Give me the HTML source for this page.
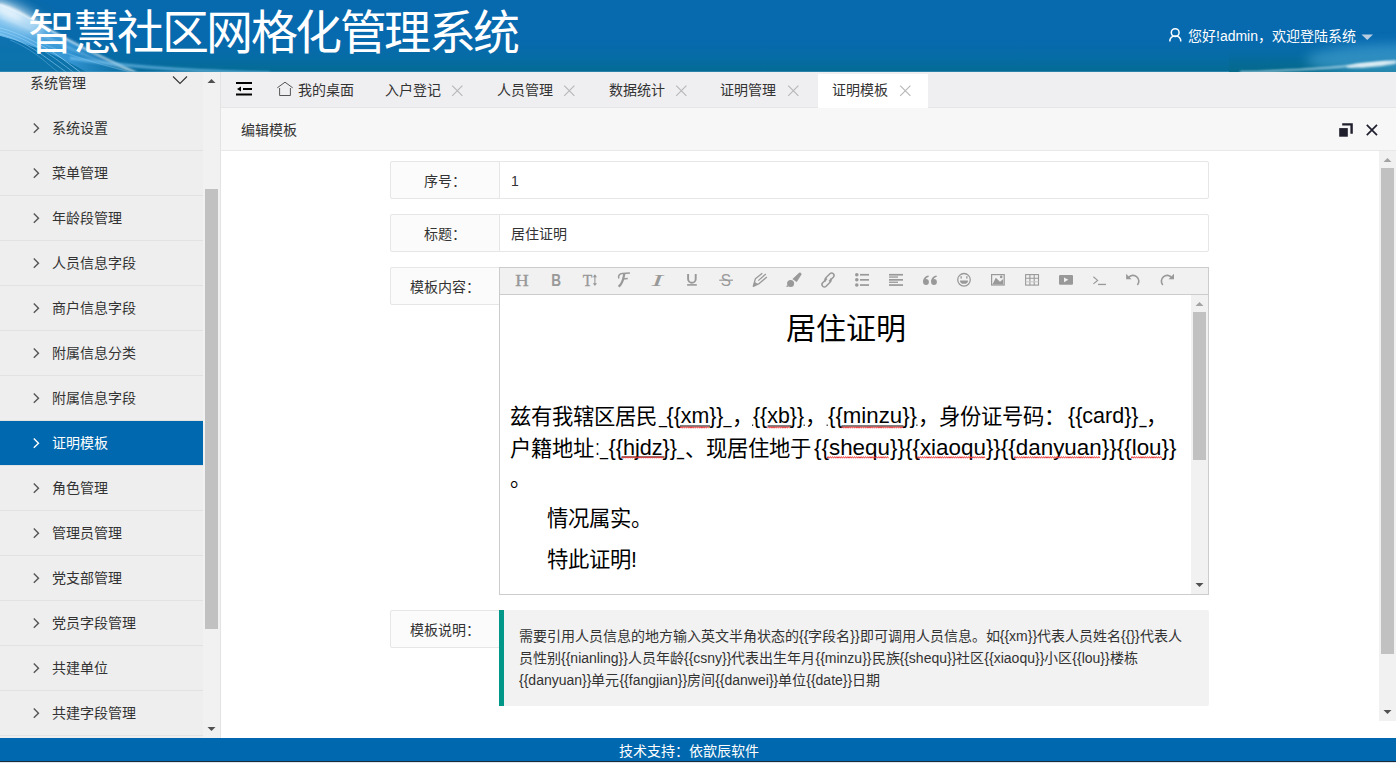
<!DOCTYPE html>
<html lang="zh-CN">
<head>
<meta charset="utf-8">
<style>
*{margin:0;padding:0;box-sizing:border-box}
html,body{width:1396px;height:763px;overflow:hidden;background:#fff;font-family:"Liberation Sans",sans-serif;font-size:14px;color:#333}
.a{position:absolute}
.t{position:absolute;white-space:nowrap;line-height:16px}
#hdr{left:0;top:0;width:1396px;height:72px;background:linear-gradient(to bottom,#0769ae 0%,#0769ae 55%,#066ca6 78%,#046b94 100%);overflow:hidden}
#title{left:28px;top:3px;font-size:47px;line-height:60px;color:#fff;white-space:nowrap;letter-spacing:-2.5px}
#side{left:0;top:72px;width:203px;height:666px;background:#eee;overflow:hidden}
.sep{position:absolute;left:0;width:203px;height:1px;background:#e2e2e2}
.sb{position:absolute;background:#f1f1f1}
.th{position:absolute;background:#c1c1c1}
#tabs{left:221px;top:72px;width:1175px;height:36px;background:#efeef1;border-bottom:1px solid #e6e6e6}
#chdr{left:221px;top:108px;width:1175px;height:43px;background:#f7f7f7;border-bottom:1px solid #e8e8e8}
.lbl{position:absolute;left:390px;width:110px;height:38px;background:#fbfbfb;border:1px solid #e6e6e6;border-radius:2px 0 0 2px;text-align:center;line-height:16px;padding-top:11px;color:#333}
.inp{position:absolute;left:499px;width:710px;height:38px;background:#fff;border:1px solid #e6e6e6;border-radius:0 2px 2px 0;padding-left:11px;line-height:16px;padding-top:11px;color:#333}
#footer{left:0;top:738px;width:1396px;height:23px;background:#0068ae;color:#fff}
svg{position:absolute;overflow:visible}
</style>
</head>
<body>

<div id="hdr" class="a">
<svg style="left:0;top:0" width="1396" height="72"><defs><filter id="bl1" x="-20%" y="-50%" width="140%" height="200%"><feGaussianBlur stdDeviation="0.9"/></filter><filter id="bl05" x="-20%" y="-50%" width="140%" height="200%"><feGaussianBlur stdDeviation="0.45"/></filter><filter id="bl3" x="-50%" y="-50%" width="200%" height="200%"><feGaussianBlur stdDeviation="3"/></filter><filter id="bl6" x="-50%" y="-50%" width="200%" height="200%"><feGaussianBlur stdDeviation="6"/></filter><linearGradient id="band" x1="0" y1="0" x2="1" y2="0"><stop offset="0" stop-color="#7cc6f5" stop-opacity="0.85"/><stop offset="0.55" stop-color="#4aaaea" stop-opacity="0.65"/><stop offset="1" stop-color="#2a8ad0" stop-opacity="0.1"/></linearGradient><linearGradient id="rb" x1="0" y1="0" x2="0" y2="1"><stop offset="0" stop-color="#06699c" stop-opacity="0"/><stop offset="1" stop-color="#056a8a" stop-opacity="0.9"/></linearGradient></defs><path d="M0 0H40C60 10 80 25 100 40C120 52 150 64 190 72H0Z" fill="#0b6ea6" opacity="0.35"/><path d="M0 4C20 11 40 24 62 36C82 47 102 58 128 72H86C62 58 36 46 0 36Z" fill="url(#band)"/><path d="M0 36C36 46 62 58 86 72H0Z" fill="#127ab4" opacity="0.5"/><ellipse cx="14" cy="15" rx="34" ry="10" transform="rotate(26 14 15)" fill="#e8f6ff" opacity="0.75" filter="url(#bl6)"/><ellipse cx="8" cy="12" rx="16" ry="5" transform="rotate(26 8 12)" fill="#ffffff" opacity="0.55" filter="url(#bl3)"/><g fill="none" filter="url(#bl1)"><path d="M0 4.5C12 8 24 14 36 22C52 31 68 40 84 48C100 56 115 64 135 72" stroke="#fff" stroke-opacity="0.85" stroke-width="1.8"/><path d="M0 17C14 21 26 27 40 34C62 45 84 55 108 64C118 68 126 70 138 72" stroke="#d0eeff" stroke-opacity="0.5" stroke-width="1.2"/></g><g fill="none" stroke="#9ad6fb" filter="url(#bl05)"><path d="M0 28C16 32 30 39 46 48C58 55 68 63 80 72" stroke-opacity="0.65" stroke-width="1"/><path d="M0 31C16 35 30 42 44 51C55 58 64 65 73 72" stroke-opacity="0.5" stroke-width="1"/><path d="M0 34C15 38 28 45 41 54C51 61 59 67 66 72" stroke-opacity="0.55" stroke-width="1"/><path d="M10 40C25 46 38 55 48 64C52 67 55 70 58 72" stroke-opacity="0.3" stroke-width="1"/><path d="M40 42C60 52 90 62 130 72" stroke-opacity="0.35" stroke-width="1"/></g><path d="M70 58C120 66 170 70 270 73" fill="none" stroke="#8fd6ff" stroke-opacity="0.55" stroke-width="3" filter="url(#bl1)"/><rect x="0" y="71" width="1396" height="1" fill="#5aa0c4" opacity="0.45"/><rect x="1229" y="48" width="167" height="24" fill="url(#rb)"/><ellipse cx="1396" cy="60" rx="90" ry="16" fill="#5fb8e8" opacity="0.45" filter="url(#bl6)"/><path d="M1240 72C1290 71 1340 68 1396 61" fill="none" stroke="#e8f8ff" stroke-opacity="0.8" stroke-width="1.4" filter="url(#bl1)"/><ellipse cx="1372" cy="64.5" rx="26" ry="2.6" transform="rotate(-5 1372 64.5)" fill="#fff" opacity="0.75" filter="url(#bl1)"/></svg>
<div id="title" class="a">智慧社区网格化管理系统</div>
<svg style="left:0;top:0" width="1396" height="72"><g fill="none" stroke="#fff" stroke-width="1.5"><circle cx="1175.2" cy="32.6" r="3.9"/><path d="M1169.8 41.5c0-3.5 2.4-5.6 5.5-5.6s5.5 2.1 5.5 5.6"/></g><path d="M1361.5 34.5h11.5l-5.75 5.5z" fill="#b9cde0"/></svg>
<div class="t" style="left:1188px;top:28px;color:#fff">您好!admin，欢迎登陆系统</div>
</div>
<div id="side" class="a">
<div class="t" style="left:30px;top:3px">系统管理</div>
<svg style="left:0;top:0" width="203" height="40"><path d="M173 4.5l7 7 7-7" fill="none" stroke="#333" stroke-width="1.1"/></svg>
<div class="sep" style="top:78px"></div>
<svg style="left:0;top:34px" width="60" height="44"><path d="M33.8 17.6l4.7 4.6-4.7 4.6" fill="none" stroke="#555" stroke-width="1.4"/></svg>
<div class="t" style="left:52px;top:48px;color:#333">系统设置</div>
<div class="sep" style="top:123px"></div>
<svg style="left:0;top:79px" width="60" height="44"><path d="M33.8 17.6l4.7 4.6-4.7 4.6" fill="none" stroke="#555" stroke-width="1.4"/></svg>
<div class="t" style="left:52px;top:93px;color:#333">菜单管理</div>
<div class="sep" style="top:168px"></div>
<svg style="left:0;top:124px" width="60" height="44"><path d="M33.8 17.6l4.7 4.6-4.7 4.6" fill="none" stroke="#555" stroke-width="1.4"/></svg>
<div class="t" style="left:52px;top:138px;color:#333">年龄段管理</div>
<div class="sep" style="top:213px"></div>
<svg style="left:0;top:169px" width="60" height="44"><path d="M33.8 17.6l4.7 4.6-4.7 4.6" fill="none" stroke="#555" stroke-width="1.4"/></svg>
<div class="t" style="left:52px;top:183px;color:#333">人员信息字段</div>
<div class="sep" style="top:258px"></div>
<svg style="left:0;top:214px" width="60" height="44"><path d="M33.8 17.6l4.7 4.6-4.7 4.6" fill="none" stroke="#555" stroke-width="1.4"/></svg>
<div class="t" style="left:52px;top:228px;color:#333">商户信息字段</div>
<div class="sep" style="top:303px"></div>
<svg style="left:0;top:259px" width="60" height="44"><path d="M33.8 17.6l4.7 4.6-4.7 4.6" fill="none" stroke="#555" stroke-width="1.4"/></svg>
<div class="t" style="left:52px;top:273px;color:#333">附属信息分类</div>
<div class="sep" style="top:348px"></div>
<svg style="left:0;top:304px" width="60" height="44"><path d="M33.8 17.6l4.7 4.6-4.7 4.6" fill="none" stroke="#555" stroke-width="1.4"/></svg>
<div class="t" style="left:52px;top:318px;color:#333">附属信息字段</div>
<div class="a" style="left:0;top:349px;width:203px;height:44px;background:#0068ae"></div>
<div class="sep" style="top:393px"></div>
<svg style="left:0;top:349px" width="60" height="44"><path d="M33.8 17.6l4.7 4.6-4.7 4.6" fill="none" stroke="#fff" stroke-width="1.4"/></svg>
<div class="t" style="left:52px;top:363px;color:#fff">证明模板</div>
<div class="sep" style="top:438px"></div>
<svg style="left:0;top:394px" width="60" height="44"><path d="M33.8 17.6l4.7 4.6-4.7 4.6" fill="none" stroke="#555" stroke-width="1.4"/></svg>
<div class="t" style="left:52px;top:408px;color:#333">角色管理</div>
<div class="sep" style="top:483px"></div>
<svg style="left:0;top:439px" width="60" height="44"><path d="M33.8 17.6l4.7 4.6-4.7 4.6" fill="none" stroke="#555" stroke-width="1.4"/></svg>
<div class="t" style="left:52px;top:453px;color:#333">管理员管理</div>
<div class="sep" style="top:528px"></div>
<svg style="left:0;top:484px" width="60" height="44"><path d="M33.8 17.6l4.7 4.6-4.7 4.6" fill="none" stroke="#555" stroke-width="1.4"/></svg>
<div class="t" style="left:52px;top:498px;color:#333">党支部管理</div>
<div class="sep" style="top:573px"></div>
<svg style="left:0;top:529px" width="60" height="44"><path d="M33.8 17.6l4.7 4.6-4.7 4.6" fill="none" stroke="#555" stroke-width="1.4"/></svg>
<div class="t" style="left:52px;top:543px;color:#333">党员字段管理</div>
<div class="sep" style="top:618px"></div>
<svg style="left:0;top:574px" width="60" height="44"><path d="M33.8 17.6l4.7 4.6-4.7 4.6" fill="none" stroke="#555" stroke-width="1.4"/></svg>
<div class="t" style="left:52px;top:588px;color:#333">共建单位</div>
<div class="sep" style="top:663px"></div>
<svg style="left:0;top:619px" width="60" height="44"><path d="M33.8 17.6l4.7 4.6-4.7 4.6" fill="none" stroke="#555" stroke-width="1.4"/></svg>
<div class="t" style="left:52px;top:633px;color:#333">共建字段管理</div>
</div>
<div class="sb" style="left:203px;top:72px;width:17px;height:666px"></div>
<div class="th" style="left:205px;top:189px;width:13px;height:440px"></div>
<svg style="left:0;top:0" width="1" height="1"><path d="M207.5 83h8l-4-4z" fill="#505050"/><path d="M207.5 727h8l-4 4z" fill="#505050"/></svg>
<div class="a" style="left:220px;top:72px;width:1px;height:666px;background:#e3e3e3"></div>
<div id="tabs" class="a"></div>
<div class="a" style="left:818px;top:74px;width:110px;height:34px;background:#fff"></div>
<svg style="left:0;top:0" width="1" height="1"><rect x="236" y="82" width="16" height="2" fill="#000"/><rect x="243" y="88" width="9" height="2" fill="#000"/><path d="M241 86.5v5l-4-2.5z" fill="#000"/><rect x="236" y="93.5" width="16" height="2" fill="#000"/><path d="M277.3 87.8L285 82.2l7.7 5.6M279.6 88v7.5h10.8V88" fill="none" stroke="#555" stroke-width="1"/></svg>
<div class="t" style="left:298px;top:82px;color:#333">我的桌面</div>
<div class="t" style="left:385px;top:82px;color:#333">入户登记</div>
<svg style="left:452px;top:85px" width="11" height="11"><path d="M0.2 0.6l10.2 10.2M10.4 0.6l-10.2 10.2" stroke="#b8b8b8" stroke-width="1.2"/></svg>
<div class="t" style="left:497px;top:82px;color:#333">人员管理</div>
<svg style="left:564px;top:85px" width="11" height="11"><path d="M0.2 0.6l10.2 10.2M10.4 0.6l-10.2 10.2" stroke="#b8b8b8" stroke-width="1.2"/></svg>
<div class="t" style="left:609px;top:82px;color:#333">数据统计</div>
<svg style="left:676px;top:85px" width="11" height="11"><path d="M0.2 0.6l10.2 10.2M10.4 0.6l-10.2 10.2" stroke="#b8b8b8" stroke-width="1.2"/></svg>
<div class="t" style="left:720px;top:82px;color:#333">证明管理</div>
<svg style="left:788px;top:85px" width="11" height="11"><path d="M0.2 0.6l10.2 10.2M10.4 0.6l-10.2 10.2" stroke="#b8b8b8" stroke-width="1.2"/></svg>
<div class="t" style="left:832px;top:82px;color:#333">证明模板</div>
<svg style="left:900px;top:85px" width="11" height="11"><path d="M0.2 0.6l10.2 10.2M10.4 0.6l-10.2 10.2" stroke="#b8b8b8" stroke-width="1.2"/></svg>
<div id="chdr" class="a"><div class="t" style="left:20px;top:14px">编辑模板</div></div>
<svg style="left:0;top:0" width="1" height="1"><path d="M1342.2 124.4h9.4v9.3" fill="none" stroke="#1f1f2e" stroke-width="2.4"/><rect x="1339.2" y="128.1" width="8.6" height="8.6" fill="#1f1f2e"/><path d="M1366.8 124.9l10.2 10.2M1377 124.9l-10.2 10.2" stroke="#1f1f2e" stroke-width="1.7"/></svg>
<div class="sb" style="left:1379px;top:151px;width:17px;height:570px"></div>
<div class="th" style="left:1381px;top:168px;width:13px;height:486px"></div>
<svg style="left:0;top:0" width="1" height="1"><path d="M1383.5 162h8l-4-4z" fill="#a3a3a3"/><path d="M1383.5 710h8l-4 4z" fill="#505050"/></svg>
<div class="lbl" style="top:161px">序号：</div>
<div class="inp" style="top:161px">1</div>
<div class="lbl" style="top:214px">标题：</div>
<div class="inp" style="top:214px">居住证明</div>
<div class="lbl" style="top:267px">模板内容：</div>
<div class="lbl" style="top:610px">模板说明：</div>
<div class="a" style="left:499px;top:267px;width:710px;height:328px;border:1px solid #ccc;background:#fff"></div>
<div class="a" style="left:500px;top:268px;width:708px;height:27px;background:#f1f1f1;border-bottom:1px solid #ccc"></div>
<div class="sb" style="left:1191px;top:295px;width:17px;height:299px"></div>
<div class="th" style="left:1193px;top:312px;width:13px;height:148px"></div>
<svg style="left:0;top:0" width="1" height="1"><path d="M1195.5 306h8l-4-4z" fill="#a3a3a3"/><path d="M1195.5 583h8l-4 4z" fill="#505050"/></svg>
<svg style="left:0;top:0" width="1" height="1"><g fill="#999"><text x="522" y="285.7" font-family="Liberation Serif" stroke="#999" stroke-width="0.35" font-size="17" text-anchor="middle" textLength="13.5" lengthAdjust="spacingAndGlyphs">H</text><text x="551.2" y="285.9" font-family="Liberation Sans" font-weight="bold" font-size="16.8" textLength="9.8" lengthAdjust="spacingAndGlyphs">B</text><text x="582.8" y="285.7" font-family="Liberation Serif" stroke="#999" stroke-width="0.35" font-size="17" textLength="9.5" lengthAdjust="spacingAndGlyphs">T</text><path d="M594.9 275.5v9" stroke="#999" stroke-width="1.1"/><path d="M592.8 277.2l2.1-2.9 2.1 2.9zM592.8 283.2l2.1 2.9 2.1-2.9z"/><g fill="none" stroke="#999"><path d="M618.8 278.4C617.9 275.6 619.6 273.8 622.3 273.6L629.9 273.1" stroke-width="1.5"/><path d="M624.4 273.4C623.3 278.3 623.2 283.4 618.6 286.6" stroke-width="2.2"/><path d="M622.6 279L627.8 278.5" stroke-width="1.6"/></g><text x="651.5" y="285.7" font-family="Liberation Serif" font-style="italic" font-size="17.5" textLength="11.5" lengthAdjust="spacingAndGlyphs">I</text><path d="M688.1 273.9v5.1a3.8 3.8 0 0 0 7.6 0v-5.1" fill="none" stroke="#999" stroke-width="1.9"/><rect x="687.1" y="284.1" width="9.7" height="1.6"/><text x="720.8" y="285.8" font-family="Liberation Sans" font-size="17" textLength="10.2" lengthAdjust="spacingAndGlyphs">S</text><rect x="719.2" y="279.6" width="13.8" height="1.2"/><path d="M762.3 273.2L755.4 278.8 753.3 286.3 758.6 283.9 766.9 276.9" fill="none" stroke="#999" stroke-width="1.3" stroke-linejoin="round"/><path d="M758.3 280.6L765.8 274" stroke="#999" stroke-width="1.2"/><path d="M753.3 286.3l1.2-4.6 3.4 2.3z"/><circle cx="790.6" cy="283.6" r="3.5"/><path d="M787.2 284.5l1 2.3 -1.9 .1z"/><path d="M792.8 279l6.1-5.7a1.35 1.35 0 0 1 2.3 1.2l-4.6 7.2z" stroke="#999" stroke-width="0.6" stroke-linejoin="round"/><g fill="none" stroke="#999" stroke-width="1.5"><path d="M826.9 278.6l-4.2 4.2a2.4 2.4 0 0 0 3.4 3.4l4.2-4.2a2.4 2.4 0 0 0 0-3.4"/><path d="M829.1 281.4l4.2-4.2a2.4 2.4 0 0 0-3.4-3.4l-4.2 4.2a2.4 2.4 0 0 0 0 3.4"/></g><circle cx="856.8" cy="274.7" r="1.8"/><circle cx="856.8" cy="279.8" r="1.8"/><circle cx="856.8" cy="285" r="1.8"/><rect x="860" y="273.9" width="9" height="1.7"/><rect x="860" y="279" width="9" height="1.7"/><rect x="860" y="284.2" width="9" height="1.7"/><rect x="889" y="273.9" width="14" height="1.7"/><rect x="889" y="279" width="14" height="1.7"/><rect x="889" y="284.2" width="14" height="1.7"/><rect x="889" y="276.4" width="9" height="1.3"/><rect x="889" y="281.6" width="9" height="1.3"/><circle cx="926" cy="282" r="2.9"/><path d="M923.2 282.3c-.3-3.6 1.6-6.3 5.3-6.9l.3 1.4c-2.4.6-3.5 2.2-3.3 4.4z"/><circle cx="934" cy="282" r="2.9"/><path d="M931.2 282.3c-.3-3.6 1.6-6.3 5.3-6.9l.3 1.4c-2.4.6-3.5 2.2-3.3 4.4z"/><circle cx="964" cy="279.8" r="6.3" fill="none" stroke="#999" stroke-width="1.3"/><rect x="960.5" y="276.2" width="1.3" height="2.4"/><rect x="966.2" y="276.2" width="1.3" height="2.4"/><path d="M960 280.4h8a4 3.4 0 0 1-8 0z"/><rect x="991.6" y="274.6" width="12.6" height="10.4" fill="none" stroke="#999" stroke-width="1.2"/><path d="M992.4 284.4l3.4-6.7 4.2 4.1 3.2-2.8v5.4z"/><circle cx="1001.2" cy="276.9" r="1.3"/><g fill="none" stroke="#999" stroke-width="1.1"><rect x="1025.6" y="274.6" width="12.9" height="10.5"/><path d="M1029.9 274.6v10.5M1034.2 274.6v10.5M1025.6 278.3h12.9"/></g><path d="M1025.6 281.8h12.9" stroke="#c8c8c8" stroke-width="1"/><rect x="1059" y="274.9" width="14" height="9.9" rx="1.2"/><path d="M1064 277.4v4.8l4.3-2.4z" fill="#f1f1f1"/><path d="M1093.4 276.8l4.2 3.6-4.2 3.5" fill="none" stroke="#999" stroke-width="1.2"/><rect x="1098" y="283.8" width="8" height="1.3"/><path d="M1128.6 277.4a5.6 5.6 0 1 1 8.8 7.6" fill="none" stroke="#999" stroke-width="1.6"/><path d="M1126.1 273.8v5.4h5.4z"/><path d="M1171.6 277.4a5.6 5.6 0 1 0-8.8 7.6" fill="none" stroke="#999" stroke-width="1.6"/><path d="M1174 273.8v5.4h-5.4z"/></g></svg>
<svg style="left:0;top:0" width="1" height="1"><g font-family="Liberation Sans" fill="#000"><text x="786" y="339.3" font-size="30">居住证明</text><text x="510" y="424" font-size="21.33">兹有我辖区居民</text><text x="659" y="423.4" font-size="22.6" textLength="8" lengthAdjust="spacingAndGlyphs">_</text><text x="666.5" y="423.4" font-size="22.6" textLength="57" lengthAdjust="spacingAndGlyphs">{{xm}}</text><text x="723.5" y="423.4" font-size="22.6" textLength="8" lengthAdjust="spacingAndGlyphs">_</text><text x="732" y="424" font-size="21.33">，</text><text x="753" y="423.4" font-size="22.6" textLength="51" lengthAdjust="spacingAndGlyphs">{{xb}}</text><text x="805" y="424" font-size="21.33">，</text><text x="828" y="423.4" font-size="22.6" textLength="89" lengthAdjust="spacingAndGlyphs">{{minzu}}</text><text x="918" y="424" font-size="21.33">，身份证号码：</text><text x="1068" y="423.4" font-size="22.6" textLength="70.5" lengthAdjust="spacingAndGlyphs">{{card}}</text><text x="1139.5" y="423.4" font-size="22.6" textLength="7" lengthAdjust="spacingAndGlyphs">_</text><text x="1146" y="424" font-size="21.33">，</text><text x="510" y="455.5" font-size="21.33">户籍地址</text><text x="595.5" y="454.6" font-size="22.6" textLength="4" lengthAdjust="spacingAndGlyphs">:</text><text x="600" y="454.6" font-size="22.6" textLength="8" lengthAdjust="spacingAndGlyphs">_</text><text x="608.5" y="454.6" font-size="22.6" textLength="68.5" lengthAdjust="spacingAndGlyphs">{{hjdz}}</text><text x="677" y="454.6" font-size="22.6" textLength="7" lengthAdjust="spacingAndGlyphs">_</text><text x="684.5" y="455.5" font-size="21.33">、现居住地于</text><text x="814" y="454.6" font-size="22.6" textLength="362.5" lengthAdjust="spacingAndGlyphs">{{shequ}}{{xiaoqu}}{{danyuan}}{{lou}}</text><text x="510" y="486" font-size="21.33">。</text><text x="547" y="526" font-size="21.33">情况属实。</text><text x="547" y="567" font-size="21.33">特此证明!</text></g><g stroke="#000" stroke-width="1"><path d="M680 426h30M767.5 426h24M841.5 426h62M621.5 457h43"/></g><g fill="#333"><rect x="752" y="424.5" width="1.2" height="1.5"/><rect x="803.6" y="424.5" width="1.2" height="1.5"/><rect x="826.6" y="424.5" width="1.2" height="1.5"/><rect x="916.3" y="424.5" width="1.2" height="1.5"/></g><g fill="none" stroke="#f03a3a" stroke-width="1"><path d="M680 428.2 l1.1 -1.6 l1.1 1.6 l1.1 -1.6 l1.1 1.6 l1.1 -1.6 l1.1 1.6 l1.1 -1.6 l1.1 1.6 l1.1 -1.6 l1.1 1.6 l1.1 -1.6 l1.1 1.6 l1.1 -1.6 l1.1 1.6 l1.1 -1.6 l1.1 1.6 l1.1 -1.6 l1.1 1.6 l1.1 -1.6 l1.1 1.6 l1.1 -1.6 l1.1 1.6 l1.1 -1.6 l1.1 1.6 l1.1 -1.6 l1.1 1.6"/><path d="M767.5 428.2 l1.1 -1.6 l1.1 1.6 l1.1 -1.6 l1.1 1.6 l1.1 -1.6 l1.1 1.6 l1.1 -1.6 l1.1 1.6 l1.1 -1.6 l1.1 1.6 l1.1 -1.6 l1.1 1.6 l1.1 -1.6 l1.1 1.6 l1.1 -1.6 l1.1 1.6 l1.1 -1.6 l1.1 1.6 l1.1 -1.6 l1.1 1.6"/><path d="M841.5 428.2 l1.1 -1.6 l1.1 1.6 l1.1 -1.6 l1.1 1.6 l1.1 -1.6 l1.1 1.6 l1.1 -1.6 l1.1 1.6 l1.1 -1.6 l1.1 1.6 l1.1 -1.6 l1.1 1.6 l1.1 -1.6 l1.1 1.6 l1.1 -1.6 l1.1 1.6 l1.1 -1.6 l1.1 1.6 l1.1 -1.6 l1.1 1.6 l1.1 -1.6 l1.1 1.6 l1.1 -1.6 l1.1 1.6 l1.1 -1.6 l1.1 1.6 l1.1 -1.6 l1.1 1.6 l1.1 -1.6 l1.1 1.6 l1.1 -1.6 l1.1 1.6 l1.1 -1.6 l1.1 1.6 l1.1 -1.6 l1.1 1.6 l1.1 -1.6 l1.1 1.6 l1.1 -1.6 l1.1 1.6 l1.1 -1.6 l1.1 1.6 l1.1 -1.6 l1.1 1.6 l1.1 -1.6 l1.1 1.6 l1.1 -1.6 l1.1 1.6 l1.1 -1.6 l1.1 1.6 l1.1 -1.6 l1.1 1.6 l1.1 -1.6 l1.1 1.6 l1.1 -1.6 l1.1 1.6"/><path d="M621.5 458.2 l1.1 -1.6 l1.1 1.6 l1.1 -1.6 l1.1 1.6 l1.1 -1.6 l1.1 1.6 l1.1 -1.6 l1.1 1.6 l1.1 -1.6 l1.1 1.6 l1.1 -1.6 l1.1 1.6 l1.1 -1.6 l1.1 1.6 l1.1 -1.6 l1.1 1.6 l1.1 -1.6 l1.1 1.6 l1.1 -1.6 l1.1 1.6 l1.1 -1.6 l1.1 1.6 l1.1 -1.6 l1.1 1.6 l1.1 -1.6 l1.1 1.6 l1.1 -1.6 l1.1 1.6 l1.1 -1.6 l1.1 1.6 l1.1 -1.6 l1.1 1.6 l1.1 -1.6 l1.1 1.6 l1.1 -1.6 l1.1 1.6 l1.1 -1.6 l1.1 1.6"/><path d="M827 458.2 l1.1 -1.6 l1.1 1.6 l1.1 -1.6 l1.1 1.6 l1.1 -1.6 l1.1 1.6 l1.1 -1.6 l1.1 1.6 l1.1 -1.6 l1.1 1.6 l1.1 -1.6 l1.1 1.6 l1.1 -1.6 l1.1 1.6 l1.1 -1.6 l1.1 1.6 l1.1 -1.6 l1.1 1.6 l1.1 -1.6 l1.1 1.6 l1.1 -1.6 l1.1 1.6 l1.1 -1.6 l1.1 1.6 l1.1 -1.6 l1.1 1.6 l1.1 -1.6 l1.1 1.6 l1.1 -1.6 l1.1 1.6 l1.1 -1.6 l1.1 1.6 l1.1 -1.6 l1.1 1.6 l1.1 -1.6 l1.1 1.6 l1.1 -1.6 l1.1 1.6 l1.1 -1.6 l1.1 1.6 l1.1 -1.6 l1.1 1.6 l1.1 -1.6 l1.1 1.6 l1.1 -1.6 l1.1 1.6 l1.1 -1.6 l1.1 1.6 l1.1 -1.6 l1.1 1.6 l1.1 -1.6 l1.1 1.6 l1.1 -1.6 l1.1 1.6 l1.1 -1.6 l1.1 1.6"/><path d="M917 458.2 l1.1 -1.6 l1.1 1.6 l1.1 -1.6 l1.1 1.6 l1.1 -1.6 l1.1 1.6 l1.1 -1.6 l1.1 1.6 l1.1 -1.6 l1.1 1.6 l1.1 -1.6 l1.1 1.6 l1.1 -1.6 l1.1 1.6 l1.1 -1.6 l1.1 1.6 l1.1 -1.6 l1.1 1.6 l1.1 -1.6 l1.1 1.6 l1.1 -1.6 l1.1 1.6 l1.1 -1.6 l1.1 1.6 l1.1 -1.6 l1.1 1.6 l1.1 -1.6 l1.1 1.6 l1.1 -1.6 l1.1 1.6 l1.1 -1.6 l1.1 1.6 l1.1 -1.6 l1.1 1.6 l1.1 -1.6 l1.1 1.6 l1.1 -1.6 l1.1 1.6 l1.1 -1.6 l1.1 1.6 l1.1 -1.6 l1.1 1.6 l1.1 -1.6 l1.1 1.6 l1.1 -1.6 l1.1 1.6 l1.1 -1.6 l1.1 1.6 l1.1 -1.6 l1.1 1.6 l1.1 -1.6 l1.1 1.6 l1.1 -1.6 l1.1 1.6 l1.1 -1.6 l1.1 1.6 l1.1 -1.6 l1.1 1.6 l1.1 -1.6 l1.1 1.6 l1.1 -1.6 l1.1 1.6"/><path d="M1014 458.2 l1.1 -1.6 l1.1 1.6 l1.1 -1.6 l1.1 1.6 l1.1 -1.6 l1.1 1.6 l1.1 -1.6 l1.1 1.6 l1.1 -1.6 l1.1 1.6 l1.1 -1.6 l1.1 1.6 l1.1 -1.6 l1.1 1.6 l1.1 -1.6 l1.1 1.6 l1.1 -1.6 l1.1 1.6 l1.1 -1.6 l1.1 1.6 l1.1 -1.6 l1.1 1.6 l1.1 -1.6 l1.1 1.6 l1.1 -1.6 l1.1 1.6 l1.1 -1.6 l1.1 1.6 l1.1 -1.6 l1.1 1.6 l1.1 -1.6 l1.1 1.6 l1.1 -1.6 l1.1 1.6 l1.1 -1.6 l1.1 1.6 l1.1 -1.6 l1.1 1.6 l1.1 -1.6 l1.1 1.6 l1.1 -1.6 l1.1 1.6 l1.1 -1.6 l1.1 1.6 l1.1 -1.6 l1.1 1.6 l1.1 -1.6 l1.1 1.6 l1.1 -1.6 l1.1 1.6 l1.1 -1.6 l1.1 1.6 l1.1 -1.6 l1.1 1.6 l1.1 -1.6 l1.1 1.6 l1.1 -1.6 l1.1 1.6 l1.1 -1.6 l1.1 1.6 l1.1 -1.6 l1.1 1.6 l1.1 -1.6 l1.1 1.6 l1.1 -1.6 l1.1 1.6 l1.1 -1.6 l1.1 1.6 l1.1 -1.6 l1.1 1.6 l1.1 -1.6 l1.1 1.6 l1.1 -1.6 l1.1 1.6 l1.1 -1.6 l1.1 1.6 l1.1 -1.6 l1.1 1.6"/><path d="M1131 458.2 l1.1 -1.6 l1.1 1.6 l1.1 -1.6 l1.1 1.6 l1.1 -1.6 l1.1 1.6 l1.1 -1.6 l1.1 1.6 l1.1 -1.6 l1.1 1.6 l1.1 -1.6 l1.1 1.6 l1.1 -1.6 l1.1 1.6 l1.1 -1.6 l1.1 1.6 l1.1 -1.6 l1.1 1.6 l1.1 -1.6 l1.1 1.6 l1.1 -1.6 l1.1 1.6 l1.1 -1.6 l1.1 1.6 l1.1 -1.6 l1.1 1.6 l1.1 -1.6 l1.1 1.6"/></g></svg>
<div class="a" style="left:499px;top:610px;width:710px;height:96px;background:#f2f2f2;border-left:5px solid #009688;border-radius:0 2px 2px 0"></div>
<div class="t" style="left:519px;top:628px;color:#333">需要引用人员信息的地方输入英文半角状态的{{字段名}}即可调用人员信息。如{{xm}}代表人员姓名{{}}代表人</div>
<div class="t" style="left:519px;top:650px;color:#333">员性别{{nianling}}人员年龄{{csny}}代表出生年月{{minzu}}民族{{shequ}}社区{{xiaoqu}}小区{{lou}}楼栋</div>
<div class="t" style="left:519px;top:672px;color:#333">{{danyuan}}单元{{fangjian}}房间{{danwei}}单位{{date}}日期</div>
<div id="footer" class="a"><div class="t" style="left:619px;top:5px">技术支持：依歆辰软件</div></div>
<div class="a" style="left:0;top:761px;width:1396px;height:1px;background:#1a2a3a"></div>
<div class="a" style="left:0;top:762px;width:1396px;height:1px;background:#dfe8f0"></div>

</body>
</html>
